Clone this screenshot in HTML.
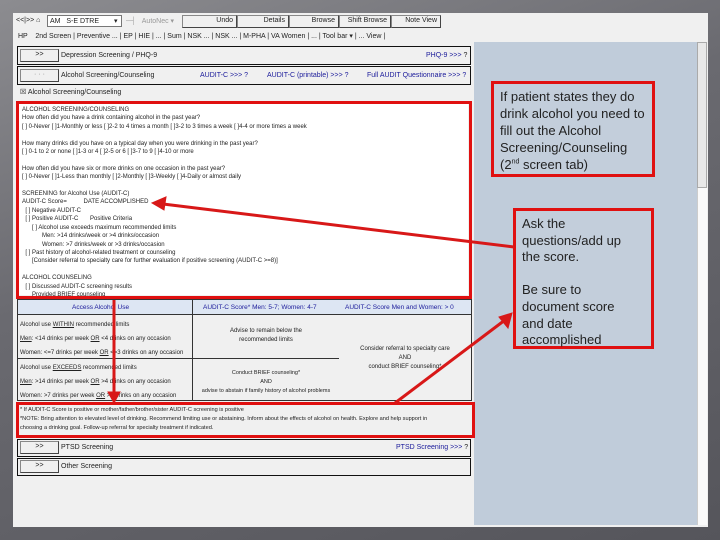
<!DOCTYPE html>
<html><head><meta charset="utf-8"><style>
*{margin:0;padding:0;box-sizing:border-box}
body{width:720px;height:540px;overflow:hidden;position:relative;background:linear-gradient(160deg,#8c8c90 0%,#6a6a70 40%,#55555b 100%);font-family:"Liberation Sans",sans-serif;}
.a{position:absolute}
.win{left:13px;top:13px;width:695px;height:514px;background:#f0f0f0;}
.t{font-size:7px;color:#222;white-space:nowrap;line-height:9px}
.btn{background:#f0f0f0;border:1px solid #888;border-right-color:#444;border-bottom-color:#444;}
.box{border:1.5px solid #111;background:#f0f0f0}
.blue{color:#1a1a9a}
.red{border:3px solid #e01010}
.call{background:#c3cedb;border:3px solid #e01010;font-size:13px;line-height:17px;color:#222;}
.mono{font-size:6px;line-height:8.4px;color:#222;white-space:pre}
</style></head><body>
<div class="a win"></div>
<div class="a t" style="left:16px;top:16px">&lt;&lt;|&gt;&gt; ⌂</div>
<div class="a" style="left:47px;top:15px;width:75px;height:12px;background:#fff;border:1px solid #777"></div>
<div class="a t" style="left:50px;top:17px">AM&nbsp;&nbsp; S-E DTRE</div>
<div class="a t" style="left:114px;top:17px">▾</div>
<div class="a t" style="left:126px;top:17px;color:#999">─┤ &nbsp;&nbsp;AutoNec ▾</div>
<div class="a btn t" style="left:182px;top:15px;width:55px;height:13px;text-align:right;padding-right:3px">Undo</div>
<div class="a btn t" style="left:237px;top:15px;width:52px;height:13px;text-align:right;padding-right:3px">Details</div>
<div class="a btn t" style="left:289px;top:15px;width:50px;height:13px;text-align:right;padding-right:3px">Browse</div>
<div class="a btn t" style="left:339px;top:15px;width:52px;height:13px;text-align:right;padding-right:3px">Shift Browse</div>
<div class="a btn t" style="left:391px;top:15px;width:50px;height:13px;text-align:right;padding-right:3px">Note View</div>
<div class="a t" style="left:18px;top:32px">HP &nbsp;&nbsp; 2nd Screen | Preventive ... | EP | HIE | ... | Sum | NSK ... | NSK ... | M-PHA | VA Women | ... | Tool bar ▾ | ... View |</div>
<div class="a" style="left:474px;top:42px;width:223px;height:483px;background:#c0ccda"></div>
<div class="a" style="left:697px;top:42px;width:10px;height:483px;background:#fafafa;border-left:1px solid #ccc"></div>
<div class="a" style="left:697px;top:42px;width:10px;height:146px;background:#e8e8e8;border:1px solid #aaa"></div>
<div class="a box" style="left:17px;top:46px;width:454px;height:19px"></div>
<div class="a btn t" style="left:20px;top:49px;width:39px;height:13px;text-align:center">&gt;&gt;</div>
<div class="a t" style="left:61px;top:51px">Depression Screening / PHQ-9</div>
<div class="a t blue" style="left:426px;top:51px">PHQ-9 &gt;&gt;&gt; <span style="color:#222">?</span></div>
<div class="a box" style="left:17px;top:66px;width:454px;height:19px"></div>
<div class="a btn t" style="left:20px;top:69px;width:39px;height:13px;color:#888;text-align:center">· · ·</div>
<div class="a t" style="left:61px;top:71px">Alcohol Screening/Counseling</div>
<div class="a t blue" style="left:200px;top:71px">AUDIT-C &gt;&gt;&gt; ?</div>
<div class="a t blue" style="left:267px;top:71px">AUDIT-C (printable) &gt;&gt;&gt; ?</div>
<div class="a t blue" style="left:367px;top:71px">Full AUDIT Questionnaire &gt;&gt;&gt; ?</div>
<div class="a t" style="left:20px;top:88px">☒ Alcohol Screening/Counseling</div>
<div class="a" style="left:19px;top:104px;width:449px;height:191px;background:#fff"></div>
<div class="a mono" style="left:22px;top:106px">ALCOHOL SCREENING/COUNSELING
How often did you have a drink containing alcohol in the past year?
[ ] 0-Never [ ]1-Monthly or less [ ]2-2 to 4 times a month [ ]3-2 to 3 times a week [ ]4-4 or more times a week

How many drinks did you have on a typical day when you were drinking in the past year?
[ ] 0-1 to 2 or none [ ]1-3 or 4 [ ]2-5 or 6 [ ]3-7 to 9 [ ]4-10 or more

How often did you have six or more drinks on one occasion in the past year?
[ ] 0-Never [ ]1-Less than monthly [ ]2-Monthly [ ]3-Weekly [ ]4-Daily or almost daily

SCREENING for Alcohol Use (AUDIT-C)
AUDIT-C Score=          DATE ACCOMPLISHED
  [ ] Negative AUDIT-C
  [ ] Positive AUDIT-C       Positive Criteria
      [ ] Alcohol use exceeds maximum recommended limits
            Men: &gt;14 drinks/week or &gt;4 drinks/occasion
            Women: &gt;7 drinks/week or &gt;3 drinks/occasion
  [ ] Past history of alcohol-related treatment or counseling
      [Consider referral to specialty care for further evaluation if positive screening (AUDIT-C &gt;=8)]

ALCOHOL COUNSELING
  [ ] Discussed AUDIT-C screening results
      Provided BRIEF counseling</div>
<div class="a red" style="left:16px;top:101px;width:456px;height:198px"></div>
<div class="a" style="left:17px;top:299px;width:455px;height:102px;border:1px solid #333;background:#f0f0f0"></div>
<div class="a" style="left:18px;top:300px;width:453px;height:15px;background:#dde6f3;border-bottom:1px solid #333"></div>
<div class="a t blue" style="left:72px;top:303px;font-size:6.5px">Access Alcohol Use</div>
<div class="a t blue" style="left:203px;top:303px;font-size:6.5px">AUDIT-C Score* Men: 5-7; Women: 4-7</div>
<div class="a t blue" style="left:345px;top:303px;font-size:6.5px">AUDIT-C Score Men and Women: &gt; 0</div>
<div class="a" style="left:192px;top:300px;width:1px;height:100px;background:#333"></div>
<div class="a" style="left:18px;top:358px;width:321px;height:1px;background:#333"></div>
<div class="a t" style="left:20px;top:318px;line-height:14px;font-size:6px">Alcohol use <u>WITHIN</u> recommended limits<br><u>Men</u>: &lt;14 drinks per week <u>OR</u> &lt;4 drinks on any occasion<br>Women: &lt;=7 drinks per week <u>OR</u> &lt;=3 drinks on any occasion</div>
<div class="a t" style="left:20px;top:361px;line-height:14px;font-size:6px">Alcohol use <u>EXCEEDS</u> recommended limits<br><u>Men</u>: &gt;14 drinks per week <u>OR</u> &gt;4 drinks on any occasion<br>Women: &gt;7 drinks per week <u>OR</u> &gt;3 drinks on any occasion</div>
<div class="a t" style="left:193px;top:327px;width:146px;text-align:center;font-size:6px">Advise to remain below the<br>recommended limits</div>
<div class="a t" style="left:193px;top:369px;width:146px;text-align:center;font-size:5.5px">Conduct BRIEF counseling*<br>AND<br>advise to abstain if family history of alcohol problems</div>
<div class="a t" style="left:340px;top:345px;width:130px;text-align:center;font-size:6px">Consider referral to specialty care<br>AND<br>conduct BRIEF counseling*</div>
<div class="a t" style="left:20px;top:406px;font-size:5.6px;line-height:9px">* If AUDIT-C Score is positive or mother/father/brother/sister AUDIT-C screening is positive<br>*NOTE: Bring attention to elevated level of drinking. Recommend limiting use or abstaining. Inform about the effects of alcohol on health. Explore and help support in<br>choosing a drinking goal. Follow-up referral for specialty treatment if indicated.</div>
<div class="a red" style="left:16px;top:402px;width:459px;height:36px"></div>
<div class="a box" style="left:17px;top:439px;width:454px;height:18px"></div>
<div class="a btn t" style="left:20px;top:441px;width:39px;height:13px;text-align:center">&gt;&gt;</div>
<div class="a t" style="left:61px;top:443px">PTSD Screening</div>
<div class="a t blue" style="left:396px;top:443px">PTSD Screening &gt;&gt;&gt; <span style="color:#222">?</span></div>
<div class="a box" style="left:17px;top:458px;width:454px;height:18px"></div>
<div class="a btn t" style="left:20px;top:460px;width:39px;height:13px;text-align:center">&gt;&gt;</div>
<div class="a t" style="left:61px;top:462px">Other Screening</div>
<div class="a call" style="left:491px;top:81px;width:164px;height:96px;padding:4px 6px">If patient states they do drink alcohol you need to fill out the Alcohol Screening/Counseling (2<sup style="font-size:7px;line-height:0">nd</sup> screen tab)</div>
<div class="a call" style="left:513px;top:208px;width:141px;height:141px;padding:5px 20px 0 6px;line-height:16.6px">Ask the questions/add up the score.<br><br>Be sure to document score and date accomplished</div>
<svg class="a" style="left:0;top:0" width="720" height="540">
<g stroke="#d81818" stroke-width="3" fill="#d81818">
<line x1="514" y1="247" x2="163" y2="204"/>
<polygon points="152,203 166,197 164,210" stroke-width="1"/>
<line x1="395" y1="403" x2="505" y2="320"/>
<polygon points="512,313 508,328 499,317" stroke-width="1"/>
<line x1="114" y1="300" x2="114" y2="394"/>
<polygon points="114,403 108,392 120,392" stroke-width="1"/>
</g>
</svg>
</body></html>
